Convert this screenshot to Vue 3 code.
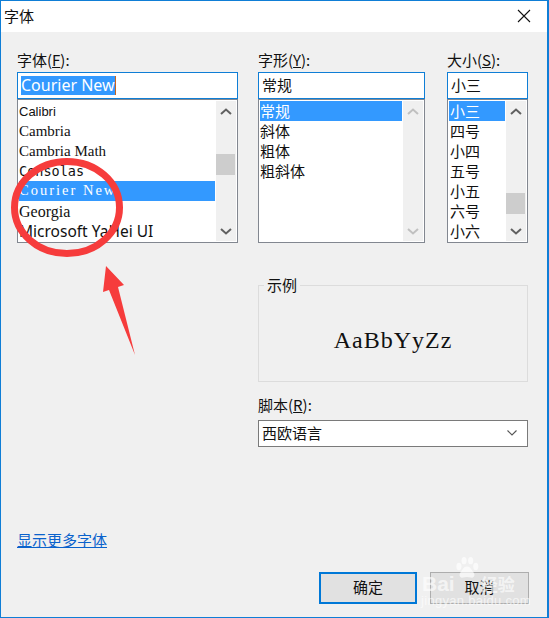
<script setup>
const lists = [
  {
    key: 'font',
    label: '字体',
    hot: 'F',
    value: 'Courier New',
    selectedValue: true,
    thumbTop: 33,
    disabled: false,
    rows: [
      { text: 'Calibri', cls: 'f-calibri' },
      { text: 'Cambria', cls: 'f-cambria' },
      { text: 'Cambria Math', cls: 'f-cambria' },
      { text: 'Consolas', cls: 'f-consolas' },
      { text: 'Courier New', cls: 'f-courier', active: true },
      { text: 'Georgia', cls: 'f-georgia' },
      { text: 'Microsoft YaHei UI', cls: 'f-yahei' },
    ],
  },
  {
    key: 'style',
    label: '字形',
    hot: 'Y',
    value: '常规',
    disabled: true,
    rows: [
      { text: '常规', active: true },
      { text: '斜体' },
      { text: '粗体' },
      { text: '粗斜体' },
    ],
  },
  {
    key: 'size',
    label: '大小',
    hot: 'S',
    value: '小三',
    thumbTop: 72,
    disabled: false,
    indent: true,
    rows: [
      { text: '小三', active: true },
      { text: '四号' },
      { text: '小四' },
      { text: '五号' },
      { text: '小五' },
      { text: '六号' },
      { text: '小六' },
    ],
  },
]
</script>

<template>
  <div class="dialog">
    <header class="titlebar">
      <span>字体</span>
      <svg class="close" width="14" height="14" viewBox="0 0 14 14">
        <path d="M1 1L13 13M13 1L1 13" stroke="#111" stroke-width="1.1" fill="none" />
      </svg>
    </header>

    <main class="body">
      <div class="grid">
        <section v-for="l in lists" :key="l.key" class="col">
          <label class="lbl">{{ l.label }}(<u>{{ l.hot }}</u>):</label>
          <div class="input">
            <span :class="{ sel: l.selectedValue }">{{ l.value }}</span>
          </div>
          <div class="list">
            <div class="rows">
              <div
                v-for="r in l.rows"
                :key="r.text"
                class="row"
                :class="[r.cls, { active: r.active, indent: l.indent }]"
              >{{ r.text }}</div>
            </div>
            <div class="scroll" :class="{ off: l.disabled }">
              <svg class="chev" width="20" height="20" viewBox="0 0 20 20">
                <path d="M5 13L10 8.500L15 13" fill="none" stroke="currentColor" stroke-width="2" />
              </svg>
              <div v-if="!l.disabled" class="thumb" :style="{ marginTop: l.thumbTop + 'px' }"></div>
              <svg class="chev end" width="20" height="20" viewBox="0 0 20 20">
                <path d="M5 8L10 12.500L15 8" fill="none" stroke="currentColor" stroke-width="2" />
              </svg>
            </div>
          </div>
        </section>

        <section class="right">
          <fieldset class="sample">
            <legend>示例</legend>
            <div class="sample-text">AaBbYyZz</div>
          </fieldset>
          <label class="lbl script-lbl">脚本(<u>R</u>):</label>
          <div class="select">
            <span>西欧语言</span>
            <svg width="10" height="6" viewBox="0 0 10 6">
              <path d="M0.500 0.500L5 5L9.500 0.500" fill="none" stroke="#555" stroke-width="1.1" />
            </svg>
          </div>
        </section>
      </div>

      <a class="more">显示更多字体</a>

      <div class="actions">
        <button class="btn primary">确定</button>
        <button class="btn">取消</button>
      </div>
    </main>

    <!-- red marks drawn on top of the screenshot -->
    <svg class="marks" width="549" height="618" viewBox="0 0 549 618">
      <ellipse cx="67" cy="207.500" rx="52.500" ry="46" fill="none" stroke="#f63c3c" stroke-width="7" />
      <path d="M106 266L124 285L118 287L135 355L109 290L103 292Z" fill="#f63c3c" />
    </svg>

    <!-- watermark -->
    <div class="wm">
      <svg class="paw" width="28" height="22" viewBox="0 0 32 30">
        <ellipse cx="5" cy="13" rx="3.500" ry="5" />
        <ellipse cx="12" cy="5" rx="3.500" ry="5" />
        <ellipse cx="21" cy="5" rx="3.500" ry="5" />
        <ellipse cx="28" cy="13" rx="3.500" ry="5" />
        <path d="M16 13C11 13 10 18 7 21C4 25 7 29 11 28C14 27 18 27 21 28C25 29 28 25 25 21C22 18 21 13 16 13Z" />
      </svg>
      <div class="wm-main"><b>Bai</b><span class="wm-gap"></span><b class="wm-cn">经验</b></div>
      <div class="wm-url">jingyan.baidu.com</div>
    </div>
  </div>
</template>

<style>
html, body {
  margin: 0;
  background: #f0f0f0;
}
</style>

<style scoped>
.dialog {
  position: relative;
  width: 549px;
  height: 618px;
  box-sizing: border-box;
  border: 1px solid #0f7ed6;
  border-right-width: 2px;
  background: #f0f0f0;
  overflow: hidden;
  color: #111;
  font-family: "Noto Sans CJK SC", "Noto Sans", sans-serif;
  font-size: 15px;
}
.titlebar {
  height: 31px;
  background: #fff;
  display: flex;
  align-items: center;
  justify-content: space-between;
  padding: 0 16px 2px 3px;
  box-sizing: border-box;
  font-size: 15px;
}
.body {
  padding: 18px 0 0 16px;
}
.grid {
  display: grid;
  width: 511px;
  grid-template-columns: 221px 167px 83px;
  column-gap: 20px;
}
.col:nth-child(3) {
  padding-left: 2px;
}
.lbl {
  display: block;
  height: 22px;
  line-height: 19px;
  font-size: 15px;
}
.input {
  box-sizing: border-box;
  height: 27px;
  border: 1px solid #0f7ed6;
  background: #fff;
  padding: 0 3px 2px 3px;
  font-size: 15px;
  display: flex;
  align-items: center;
}
.sel {
  background: #3399ff;
  color: #fff;
  border-right: 1px solid #c8641e;
  margin: 2px 0 0 0;
  line-height: 19px;
  height: 19px;
  font-family: "Noto Sans", sans-serif;
  font-size: 16px;
}
.list {
  box-sizing: border-box;
  height: 144px;
  border: 1px solid #828790;
  background: #fff;
  padding: 1px;
  display: flex;
  overflow: hidden;
}
.rows {
  flex: 1;
  min-width: 0;
}
.row {
  height: 20px;
  margin-right: 1px;
  line-height: 19px;
  font-size: 15px;
  white-space: nowrap;
}
.row.indent {
  padding-left: 1px;
}
.row.active {
  background: #3399ff;
  color: #fff;
}
.f-calibri {
  font-family: "Liberation Sans", sans-serif;
  font-size: 13px;
  line-height: 21px;
}
.f-cambria {
  font-family: "Liberation Serif", serif;
  font-size: 15px;
  line-height: 20px;
}
.f-consolas {
  font-family: "DejaVu Sans Mono", monospace;
  font-size: 13.500px;
  line-height: 20px;
}
.f-courier {
  font-family: "Liberation Serif", serif;
  font-size: 14.500px;
  letter-spacing: 2px;
  line-height: 19px;
}
.f-georgia {
  font-family: "Liberation Serif", serif;
  font-size: 16px;
  line-height: 22px;
}
.f-yahei {
  font-family: "Noto Sans", sans-serif;
  font-size: 15.500px;
  line-height: 20px;
}
.scroll {
  width: 20px;
  flex: none;
  background: #f0f0f0;
  color: #606060;
  display: flex;
  flex-direction: column;
  align-items: flex-start;
  height: 140px;
}
.scroll.off {
  color: #c0c0c0;
}
.chev {
  flex: none;
}
.chev.end {
  margin-top: auto;
}
.thumb {
  width: 19px;
  height: 21px;
  flex: none;
  background: #cdcdcd;
}
.right {
  grid-column: 2 / 4;
  width: 270px;
  padding-top: 34px;
}
.sample {
  box-sizing: border-box;
  height: 105px;
  margin: 0;
  border: 1px solid #dcdcdc;
  padding: 0;
  display: block;
}
.sample legend {
  margin-left: 5px;
  padding: 0 3px;
  font-size: 15px;
  line-height: 16px;
  height: 16px;
}
.sample-text {
  font-family: "Liberation Serif", serif;
  font-size: 24px;
  letter-spacing: 1px;
  line-height: 28px;
  text-align: center;
  margin-top: 33px;
}
.script-lbl {
  margin-top: 12px;
  height: 26px;
  line-height: 22px;
}
.select {
  box-sizing: border-box;
  height: 27px;
  border: 1px solid #7a7a7a;
  background: #fff;
  display: flex;
  align-items: center;
  justify-content: space-between;
  padding: 0 10px 2px 3px;
  font-size: 15px;
}
.more {
  display: block;
  width: max-content;
  margin-top: 84px;
  height: 20px;
  line-height: 18px;
  font-size: 15px;
  color: #0a62cc;
  text-decoration: underline;
}
.actions {
  display: flex;
  justify-content: flex-end;
  gap: 13px;
  margin-top: 21px;
  width: 512px;
}
.btn {
  box-sizing: border-box;
  width: 99px;
  height: 32px;
  border: 1px solid #adadad;
  background: #e1e1e1;
  color: #111;
  font-family: inherit;
  font-size: 15px;
  padding: 0 0 3px;
}
.btn.primary {
  width: 98px;
  border: 2px solid #0078d7;
}
.marks {
  position: absolute;
  left: -1px;
  top: -1px;
  pointer-events: none;
}
.wm {
  position: absolute;
  left: 419px;
  top: 556px;
  width: 110px;
  height: 58px;
  color: rgba(255, 255, 255, 0.65);
  font-family: "Liberation Sans", sans-serif;
}
.paw {
  position: absolute;
  left: 33px;
  top: 0;
  fill: rgba(255, 255, 255, 0.65);
}
.wm-main {
  position: absolute;
  left: 2px;
  top: 14px;
  display: flex;
  align-items: center;
  font-size: 21px;
  line-height: 26px;
}
.wm-gap {
  width: 26px;
}
.wm-cn {
  font-family: "Noto Sans CJK SC", sans-serif;
  font-size: 17px;
}
.wm-url {
  position: absolute;
  left: 1px;
  top: 36px;
  font-size: 13px;
  line-height: 16px;
  letter-spacing: 0.300px;
}
</style>
